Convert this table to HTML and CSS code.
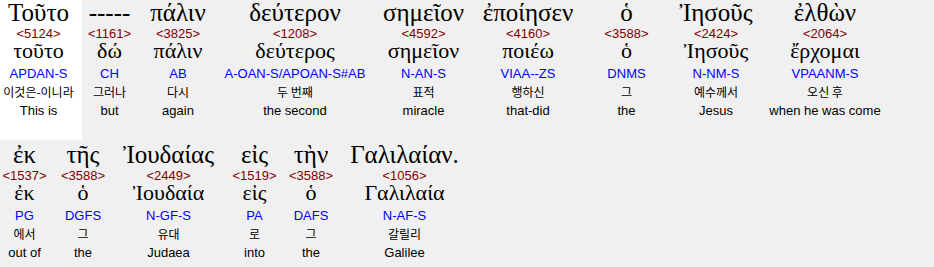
FILE: index.html
```html
<!DOCTYPE html>
<html>
<head>
<meta charset="utf-8">
<link rel="stylesheet" href="styles.css">
</head>
<body>
<div class="verse">
  <div class="word hl">
    <div class="gk">Τοῦτο</div><div class="num">&lt;5124&gt;</div><div class="lem">τοῦτο</div><div class="morph">APDAN-S</div><div class="ko">이것은-이니라</div><div class="en">This is</div>
  </div>
  <div class="word">
    <div class="gk">-----</div><div class="num">&lt;1161&gt;</div><div class="lem">δώ</div><div class="morph">CH</div><div class="ko">그러나</div><div class="en">but</div>
  </div>
  <div class="word">
    <div class="gk">πάλιν</div><div class="num">&lt;3825&gt;</div><div class="lem">πάλιν</div><div class="morph">AB</div><div class="ko">다시</div><div class="en">again</div>
  </div>
  <div class="word">
    <div class="gk">δεύτερον</div><div class="num">&lt;1208&gt;</div><div class="lem">δεύτερος</div><div class="morph">A-OAN-S/APOAN-S#AB</div><div class="ko">두 번째</div><div class="en">the second</div>
  </div>
  <div class="word">
    <div class="gk">σημεῖον</div><div class="num">&lt;4592&gt;</div><div class="lem">σημεῖον</div><div class="morph">N-AN-S</div><div class="ko">표적</div><div class="en">miracle</div>
  </div>
  <div class="word">
    <div class="gk">ἐποίησεν</div><div class="num">&lt;4160&gt;</div><div class="lem">ποιέω</div><div class="morph">VIAA--ZS</div><div class="ko">행하신</div><div class="en">that-did</div>
  </div>
  <div class="word">
    <div class="gk">ὁ</div><div class="num">&lt;3588&gt;</div><div class="lem">ὁ</div><div class="morph">DNMS</div><div class="ko">그</div><div class="en">the</div>
  </div>
  <div class="word">
    <div class="gk">Ἰησοῦς</div><div class="num">&lt;2424&gt;</div><div class="lem">Ἰησοῦς</div><div class="morph">N-NM-S</div><div class="ko">예수께서</div><div class="en">Jesus</div>
  </div>
  <div class="word">
    <div class="gk">ἐλθὼν</div><div class="num">&lt;2064&gt;</div><div class="lem">ἔρχομαι</div><div class="morph">VPAANM-S</div><div class="ko">오신 후</div><div class="en">when he was come</div>
  </div>
  <div class="word">
    <div class="gk">ἐκ</div><div class="num">&lt;1537&gt;</div><div class="lem">ἐκ</div><div class="morph">PG</div><div class="ko">에서</div><div class="en">out of</div>
  </div>
  <div class="word">
    <div class="gk">τῆς</div><div class="num">&lt;3588&gt;</div><div class="lem">ὁ</div><div class="morph">DGFS</div><div class="ko">그</div><div class="en">the</div>
  </div>
  <div class="word">
    <div class="gk">Ἰουδαίας</div><div class="num">&lt;2449&gt;</div><div class="lem">Ἰουδαία</div><div class="morph">N-GF-S</div><div class="ko">유대</div><div class="en">Judaea</div>
  </div>
  <div class="word">
    <div class="gk">εἰς</div><div class="num">&lt;1519&gt;</div><div class="lem">εἰς</div><div class="morph">PA</div><div class="ko">로</div><div class="en">into</div>
  </div>
  <div class="word">
    <div class="gk">τὴν</div><div class="num">&lt;3588&gt;</div><div class="lem">ὁ</div><div class="morph">DAFS</div><div class="ko">그</div><div class="en">the</div>
  </div>
  <div class="word">
    <div class="gk">Γαλιλαίαν.</div><div class="num">&lt;1056&gt;</div><div class="lem">Γαλιλαία</div><div class="morph">N-AF-S</div><div class="ko">갈릴리</div><div class="en">Galilee</div>
  </div>
</div>
</body>
</html>
```

FILE: styles.css
```css
html {
  overflow: hidden;
  background: #f0f0f0;
}
body {
  margin: 0;
  background: #f0f0f0;
  font-family: "Liberation Sans", Arial, sans-serif;
  font-size: 13px;
  color: #000;
}
.verse {
  display: flex;
  flex-wrap: wrap;
  row-gap: 2px;
  width: 934px;
}
.word {
  box-sizing: border-box;
  flex: none;
  height: 140px;
  text-align: center;
  white-space: nowrap;
}
.word.hl {
  background: #ffffff;
  padding-right: 5px;
}
.gk {
  font-family: "Liberation Serif", "Times New Roman", serif;
  font-size: 25px;
  line-height: 25px;
  height: 26px;
}
.num {
  color: #800000;
  line-height: 15px;
  height: 15px;
}
.lem {
  font-family: "Liberation Serif", "Times New Roman", serif;
  font-size: 22px;
  line-height: 19px;
  height: 19px;
}
.morph {
  color: #0000ff;
  line-height: 15px;
  height: 15px;
  margin-top: 6px;
}
.ko {
  font-family: "Noto Sans CJK KR", sans-serif;
  font-size: 12px;
  line-height: 14px;
  height: 15px;
  margin-top: 4px;
}
.en {
  line-height: 15px;
  height: 15px;
  margin-top: 3px;
}

/* column widths, row 1 */
.word:nth-child(1) { width: 82px; }
.word:nth-child(2) { width: 55px; }
.word:nth-child(3) { width: 82px; }
.word:nth-child(4) { width: 152px; }
.word:nth-child(5) { width: 105px; }
.word:nth-child(6) { width: 104px; }
.word:nth-child(7) { width: 93px; }
.word:nth-child(8) { width: 86px; }
.word:nth-child(9) { width: 132px; }
/* row 2 */
.word:nth-child(10) { width: 49px; }
.word:nth-child(11) { width: 68px; }
.word:nth-child(12) { width: 103px; }
.word:nth-child(13) { width: 69px; }
.word:nth-child(14) { width: 44px; }
.word:nth-child(15) { width: 143px; }
```
